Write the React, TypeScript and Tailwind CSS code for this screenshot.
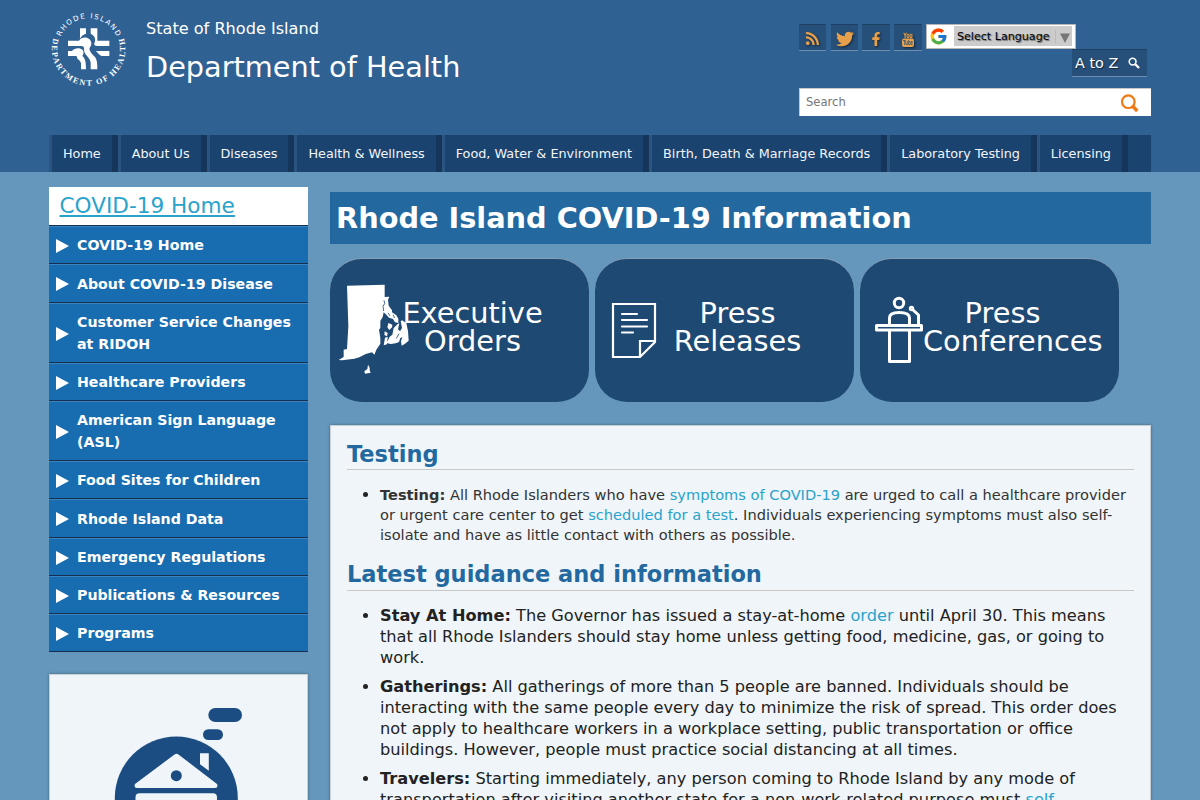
import React from "react";
import { FcGoogle } from "react-icons/fc";
import { FaRss, FaTwitter, FaFacebookF } from "react-icons/fa";

const nav = [
  "Home",
  "About Us",
  "Diseases",
  "Health & Wellness",
  "Food, Water & Environment",
  "Birth, Death & Marriage Records",
  "Laboratory Testing",
  "Licensing",
];

const side = [
  "COVID-19 Home",
  "About COVID-19 Disease",
  "Customer Service Changes at RIDOH",
  "Healthcare Providers",
  "American Sign Language (ASL)",
  "Food Sites for Children",
  "Rhode Island Data",
  "Emergency Regulations",
  "Publications & Resources",
  "Programs",
];

function Logo() {
  return (
    <svg width="82" height="82" viewBox="24 24 246 246" fill="#fff" className="-ml-px block overflow-visible">
      <defs>
        <path id="top" d="M 54 147 A 92 92 0 0 1 238 147" />
        <path id="bottom" d="M 42 111 A 110 110 0 1 0 250 111" />
      </defs>
      <text fontFamily="DejaVu Sans" fontSize="21.5">
        <textPath href="#top" startOffset="50%" textAnchor="middle" textLength="212">RHODE ISLAND</textPath>
      </text>
      <text fontFamily="Liberation Serif" fontWeight="700" fontSize="24.5">
        <textPath href="#bottom" startOffset="50%" textAnchor="middle" textLength="412">DEPARTMENT OF HEALTH</textPath>
      </text>
      <path d="M84 122H117C122 114 134 111 142 114C154 118 158 132 150 142C145 148 152 158 162 168C170 176 172 184 172 208H152V188C150 172 132 164 132 150C134 142 130 138 124 138H84Z" />
      <path d="M84 153H96C104 143 120 142 128 150C133 157 130 163 127 168C134 174 138 180 138 208H123V190C121 180 112 180 111 172C112 168 108 168 104 168H84Z" />
      <path d="M152 85H172V122H208V138H172C165 138 161 136 163 130C168 118 166 108 152 101Z" />
      <path d="M120 85H138V101C130 103 124 108 120 116Z" />
      <path d="M168 153H208V168H186C180 168 174 160 168 153Z" />
    </svg>
  );
}

function MapIcon() {
  return (
    <svg width="71.7" height="91.7" viewBox="40 310 215 275" fill="#fff" className="absolute top-[24px] left-[8px]">
      <path d="M67 318L180 315V352L194 351L190 360L192 378L202 392V398L215 407L221 418V430L211 428L205 418L193 414L185 405L177 398L174 412L167 424V445L163 450L167 475V492L155 510L149 525L142 518L123 523L104 533L89 537L52 542L42 541L57 532V510L67 508L71 440Z" />
      <path d="M191 430l12 5-1 8-8 8-6-8zM232 422l13 8 5 25 2 28-12 10-9 5-2-13 4-12-6 2-4 12-10 4-15 2-12-3 9-19 8-6 4-20 12-12 5-2-4 18 6 6 6-10-4-20zM180 455l9 5-2 10-8-4zM181 474l8-3-2 23-10 3z" />
      <path d="M130 555l5 9v8l3 7-17 3-2-7 9-7z" />
      <path d="M178 362l2 10-5 8 2 14M191 400l4 8M205 405l5 10M223 462l-8 14" fill="none" stroke="#1e4973" strokeWidth="2.5" />
    </svg>
  );
}

function DocIcon() {
  return (
    <svg width="46" height="57" viewBox="0 0 46 57" fill="none" stroke="#fff" strokeWidth="2.200" className="absolute top-[43px] left-[16px]">
      <path d="M2 2H44V40L29 55H2ZM29 55V39H44" />
      <path d="M11 12H26M11 18H36M11 24.500H36M11 30.500H22" strokeLinecap="round" />
    </svg>
  );
}

function PodiumIcon() {
  return (
    <svg width="50" height="70" viewBox="0 0 50 70" fill="none" stroke="#fff" strokeWidth="3" className="absolute top-[35px] left-[14px]" strokeLinejoin="round">
      <circle cx="25" cy="9" r="4.700" />
      <path d="M15.500 30V24C15.500 20 19 18.500 25 18.500S35.500 20 35.500 24V30M38 15L44.500 21V30" />
      <circle cx="37.500" cy="14.500" r="1.200" />
      <path d="M2.500 31.500H47.500V36H2.500ZM15.500 36V67.500H35.500V36" />
    </svg>
  );
}

function House() {
  return (
    <svg width="130" height="160" viewBox="110 705 130 160" className="absolute top-[30px] left-[60px] overflow-visible">
      <g fill="#1b4d82">
        <circle cx="176.300" cy="798" r="61.500" />
        <rect x="208.300" y="708" width="33.700" height="14" rx="7" />
        <rect x="203" y="729.300" width="20" height="10.700" rx="5.300" />
      </g>
      <path d="M174.500 754.500q2-1.500 4 0L217 784q1.500 4-2 4H137q-3.500 0-2-4Z M200 753.300h8.800v17.500l-8.800-6.500Z" fill="#eff5f8" />
      <circle cx="176.300" cy="775.700" r="5.500" fill="#1b4d82" />
      <rect x="135.500" y="793.300" width="81.500" height="50" rx="4" fill="#eff5f8" />
    </svg>
  );
}

function Social({ children, w }: { children: React.ReactNode; w: string }) {
  return (
    <div className={`${w} flex h-[27px] items-center justify-center border-t border-b border-t-[#1e4064] border-b-[#6d8eae] bg-[#264f79] pt-[2px] text-[#e6a04b] [&>svg]:drop-shadow-[1px_1px_1px_rgba(0,0,0,0.5)]`}>
      {children}
    </div>
  );
}

function Card({ icon, a, b }: { icon: React.ReactNode; a: string; b: string }) {
  return (
    <div className="relative h-[144px] w-[259px] rounded-[32px] border-t border-[#8a9fb8] bg-[#1e4973] pt-[40px] pl-[63px]">
      {icon}
      <div className="relative w-[159px] text-center text-[28.8px] leading-[28px] text-white">
        {a}
        <br />
        {b}
      </div>
    </div>
  );
}

function Link({ children }: { children: React.ReactNode }) {
  return <a className="text-[#29a3cb]">{children}</a>;
}

export default function App() {
  return (
    <div className="h-[800px] w-[1200px] overflow-hidden bg-[#6596bb] font-['DejaVu_Sans',sans-serif]">
      <header className="h-[172px] bg-[#306193]">
        <div className="mx-auto flex h-[135px] w-[1102px] justify-between">
          <div className="flex">
            <div className="w-[80px] pt-[8px]">
              <Logo />
            </div>
            <div className="pl-[17px] text-white">
              <div className="pt-[17px] text-[16.13px] leading-[24px]">State of Rhode Island</div>
              <div className="pt-[6px] text-[28.75px] leading-[40px]">Department of Health</div>
            </div>
          </div>
          <div className="w-[352px] pt-[24px]">
            <div className="flex items-start">
              <Social w="w-[27px]"><FaRss size={15} /></Social>
              <div className="w-[5px]" />
              <Social w="w-[27px]"><FaTwitter size={18} /></Social>
              <div className="w-[4px]" />
              <Social w="w-[28px]"><FaFacebookF size={14} /></Social>
              <div className="w-[4px]" />
              <Social w="w-[28px]">
                <svg width="14" height="16" viewBox="0 0 14 16" fill="currentColor">
                  <text x="2.500" y="6.500" fontFamily="Liberation Sans" fontWeight="700" fontSize="7.500" textLength="9" lengthAdjust="spacingAndGlyphs" stroke="currentColor" strokeWidth="0.300">You</text>
                  <rect x="1" y="7.500" width="12" height="8.500" rx="2" />
                  <text x="2" y="14.300" fontFamily="Liberation Sans" fontWeight="700" fontSize="7.500" textLength="10" lengthAdjust="spacingAndGlyphs" fill="#264f79">Tube</text>
                </svg>
              </Social>
              <div className="w-[4px]" />
              <div className="flex h-[25px] w-[150px] border border-[#b5b5b5] bg-white">
                <div className="w-[27px] pt-[2px] pl-[2px]"><FcGoogle size={19} /></div>
                <div className="mt-[1px] flex h-[20px] w-[118px] items-center bg-[#ccc] pl-[3px] text-[11.1px] whitespace-nowrap text-black [text-shadow:1px_1px_1px_rgba(0,0,0,0.5)]">
                  <span className="w-[98px] pt-[2px]">Select Language</span>
                  <span className="h-[13px] w-[5px] border-l border-[#bbb]" />
                  <svg width="10" height="10" viewBox="0 0 10 10" className="mt-[3px]"><path d="M0 .5H10L5 10Z" fill="#777" /></svg>
                </div>
              </div>
            </div>
            <div className="-mt-[2px] ml-[273px] flex h-[28px] w-[75px] items-center border-t border-b border-t-[#1e4064] border-b-[#6d8eae] bg-[#264f79] pl-[3px] text-[14.4px] text-white [text-shadow:1px_1px_1px_rgba(0,0,0,0.5)]">
              <span className="w-[53px] pt-[2px]">A to Z</span>
              <svg width="12" height="12" viewBox="0 0 13 13" fill="none" stroke="white"><circle cx="5" cy="5" r="3.700" strokeWidth="1.700" /><path d="M8 8L12 12" strokeWidth="2.400" /></svg>
            </div>
            <div className="mt-[11px] flex h-[28px] items-center justify-between border-t border-l border-[#c8c8c8] bg-white pr-[11px] pl-[6px] text-[11.6px] text-[#757575]">
              <span>Search</span>
              <svg width="19" height="19" viewBox="0 0 19 19" fill="none" stroke="#f17a12" className="mt-px mr-px"><circle cx="8.300" cy="7.700" r="6.300" strokeWidth="2.200" /><path d="M12.500 12L17.300 17" strokeWidth="3.400" /></svg>
            </div>
          </div>
        </div>
        <nav className="mx-auto flex h-[37px] w-[1102px] bg-[#1b436f] text-[12.8px] leading-[37px] text-[#f2f5f8]">
          {nav.map((n) => (
            <a key={n} className="border-r-[6px] border-l-[3px] border-r-[#15355a] border-l-[#2b5580] px-[10.960px] whitespace-nowrap">{n}</a>
          ))}
        </nav>
      </header>
      <div className="mx-auto flex w-[1102px] items-start">
        <aside className="mt-[15px] w-[259px]">
          <h2 className="h-[39px] border-b border-[#15304f] bg-white pl-[10.500px] text-[21.600px] leading-[37px] text-[#29a3cb] underline decoration-[2px] underline-offset-[2px]">COVID-19 Home</h2>
          {side.map((s) => (
            <div key={s} className="flex items-center border-t border-b border-t-[#3a84bf] border-b-[#15304f] bg-[#186db0] pt-[8.340px] pb-[6.340px] pl-[7px] text-[14.180px] leading-[21.650px] font-bold text-white">
              <svg width="13" height="14" viewBox="0 0 13 14" className="mr-[8px] shrink-0"><path d="M0 0L13 7L0 14Z" fill="white" /></svg>
              <span className="w-[218px]">{s}</span>
            </div>
          ))}
          <div className="relative mt-[21.500px] h-[200px] border border-[#c8cfd4] bg-[#eff5f8] shadow-[0_0_3px_rgba(0,0,0,0.3)]">
            <House />
          </div>
        </aside>
        <main className="mt-[20px] ml-[22px] w-[821px]">
          <h1 className="h-[52px] bg-[#2369a0] pl-[6px] text-[28.780px] leading-[52px] font-bold text-white">Rhode Island COVID-19 Information</h1>
          <div className="mt-[14px] flex gap-[6px]">
            <Card icon={<MapIcon />} a="Executive" b="Orders" />
            <Card icon={<DocIcon />} a="Press" b="Releases" />
            <Card icon={<PodiumIcon />} a="Press" b="Conferences" />
          </div>
          <section className="mt-[23px] h-[500px] border border-[#c8cfd4] bg-[#eff5f8] px-[16px] pt-[13px] text-[#222] shadow-[0_0_3px_rgba(0,0,0,0.3)]">
            <h2 className="h-[31px] border-b border-[#c8c8c8] text-[22.500px] leading-[30px] font-bold text-[#2369a0]">Testing</h2>
            <ul className="mt-[15px] list-disc pl-[33px] text-[14.600px] leading-[20px] text-[#333]">
              <li className="marker:text-[16px] marker:text-[#222]">
                <b>Testing:</b> All Rhode Islanders who have <Link>symptoms of COVID-19</Link> are urged to call a healthcare provider or urgent care center to get <Link>scheduled for a test</Link>. Individuals experiencing symptoms must also self-isolate and have as little contact with others as possible.
              </li>
            </ul>
            <h2 className="mt-[14px] h-[32px] border-b border-[#c8c8c8] text-[22.500px] leading-[30px] font-bold text-[#2369a0]">Latest guidance and information</h2>
            <ul className="mt-[14px] flex list-disc flex-col gap-[8px] pl-[33px] text-[16.210px] leading-[21px]">
              <li>
                <b>Stay At Home:</b> The Governor has issued a stay-at-home <Link>order</Link> until April 30. This means that all Rhode Islanders should stay home unless getting food, medicine, gas, or going to work.
              </li>
              <li>
                <b>Gatherings:</b> All gatherings of more than 5 people are banned. Individuals should be interacting with the same people every day to minimize the risk of spread. This order does not apply to healthcare workers in a workplace setting, public transportation or office buildings. However, people must practice social distancing at all times.
              </li>
              <li>
                <b>Travelers:</b> Starting immediately, any person coming to Rhode Island by any mode of transportation after visiting another state for a non-work-related purpose must <Link>self-quarantine</Link> for 14 days.
              </li>
            </ul>
          </section>
        </main>
      </div>
    </div>
  );
}
